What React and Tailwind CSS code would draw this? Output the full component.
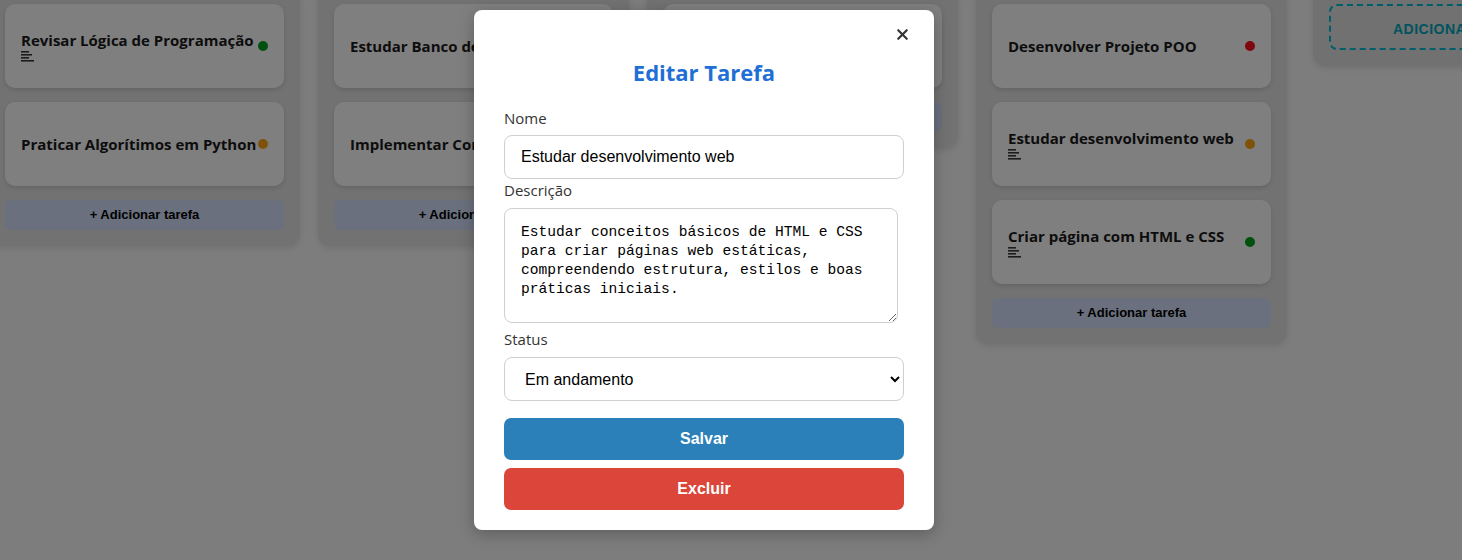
import { X } from 'lucide-react';

const columns = [
  {
    id: 'todo',
    cards: [
      { title: 'Revisar Lógica de Programação', dot: 'bg-[#00a01c]', desc: true },
      { title: 'Praticar Algorítimos em Python', dot: 'bg-[#ffa412]', desc: false },
    ],
  },
  {
    id: 'doing',
    cards: [
      { title: 'Estudar Banco de Dados SQL', dot: 'bg-[#ffa412]', desc: false },
      { title: 'Implementar Componentes React', dot: 'bg-[#ff0000]', desc: false },
    ],
  },
  {
    id: 'review',
    cards: [{ title: 'Estudar Estruturas de Dados', dot: 'bg-[#00a01c]', desc: false }],
  },
  {
    id: 'done',
    cards: [
      { title: 'Desenvolver Projeto POO', dot: 'bg-[#ff0a1e]', desc: false },
      { title: 'Estudar desenvolvimento web', dot: 'bg-[#ffa412]', desc: true },
      { title: 'Criar página com HTML e CSS', dot: 'bg-[#00a01c]', desc: true },
    ],
  },
];

function DescIcon() {
  return (
    <svg width="13" height="11" viewBox="0 0 13 11" className="mt-[1px] text-[#3a3a3a]">
      <rect x="0" y="0" width="8" height="1.6" fill="currentColor" />
      <rect x="0" y="3" width="11" height="1.6" fill="currentColor" />
      <rect x="0" y="6" width="8" height="1.6" fill="currentColor" />
      <rect x="0" y="9" width="13" height="1.6" fill="currentColor" />
    </svg>
  );
}

function Card({ card }) {
  return (
    <div className="h-[84px] bg-white rounded-[10px] shadow-[0_2px_4px_rgba(0,0,0,0.12)] px-4 flex items-center justify-between gap-[2px]">
      <div className="flex flex-col">
        <span className="font-['Open_Sans',sans-serif] font-bold text-[15px] leading-[20px] text-[#1a1a1a] whitespace-nowrap">
          {card.title}
        </span>
        {card.desc && <DescIcon />}
      </div>
      <span className={`w-[10px] h-[10px] rounded-full shrink-0 ${card.dot}`} />
    </div>
  );
}

function Column({ col }) {
  return (
    <div className="w-[311px] shrink-0 bg-[#e4e4e4] rounded-[12px] p-4 flex flex-col gap-[14px] shadow-[0_2px_6px_rgba(0,0,0,0.1)]">
      {col.cards.map((c) => (
        <Card key={c.title} card={c} />
      ))}
      <button className="h-[30px] rounded-[6px] bg-[#d4e0fa] font-['Liberation_Sans',Arial,sans-serif] font-bold text-[13px] text-black">
        + Adicionar tarefa
      </button>
    </div>
  );
}

export default function App() {
  return (
    <div className="relative h-[560px] w-[1462px] overflow-hidden bg-[#fafafa]">
      {/* Board */}
      <div className="flex items-start gap-[18px] -ml-[11px] -mt-[12px]">
        {columns.map((col) => (
          <Column key={col.id} col={col} />
        ))}
        <div className="w-[311px] shrink-0 ml-[8px] bg-[#e2e2e2] rounded-[12px] p-4 shadow-[0_2px_6px_rgba(0,0,0,0.1)]">
          <div className="h-[46px] rounded-[8px] border-2 border-dashed border-[#00bcd4] flex flex-col items-center justify-end pb-[8px] overflow-hidden">
            <span className="font-['Liberation_Sans',Arial,sans-serif] font-bold text-[14px] tracking-[0.5px] text-[#00a8bd]">
              ADICIONAR COLUNA
            </span>
          </div>
        </div>
      </div>

      {/* Overlay + modal */}
      <div className="absolute inset-0 bg-black/50 flex justify-center pr-[54px] pt-[10px]">
        <div className="w-[460px] h-[520px] bg-white rounded-[8px] shadow-[0_4px_16px_rgba(0,0,0,0.25)] px-[30px] pt-[10px] flex flex-col">
          <div className="flex justify-end -mr-[7px] h-[28px] items-center">
            <button className="text-[#333]" title="Fechar">
              <X size={17} strokeWidth={3} />
            </button>
          </div>
          <h2 className="mt-[9px] mb-[21px] text-center font-['Open_Sans',sans-serif] font-bold text-[22px] leading-[30px] text-[#1f6fd6]">
            Editar Tarefa
          </h2>

          <label className="font-['Open_Sans',sans-serif] text-[15px] leading-[20px] text-[#333] mb-[7px]">Nome</label>
          <input
            defaultValue="Estudar desenvolvimento web"
            className="h-[44px] w-full rounded-[8px] border border-[#cfcfcf] px-4 font-['Liberation_Sans',Arial,sans-serif] text-[16px] text-black outline-none"
          />

          <label className="mt-[1px] font-['Open_Sans',sans-serif] text-[15px] leading-[20px] text-[#333] mb-[8px]">Descrição</label>
          <textarea
            defaultValue="Estudar conceitos básicos de HTML e CSS para criar páginas web estáticas, compreendendo estrutura, estilos e boas práticas iniciais."
            className="block h-[115px] w-[394px] rounded-[8px] border border-[#cfcfcf] px-4 pt-[14px] pb-[10px] font-['Liberation_Mono','Courier_New',monospace] text-[14.6px] leading-[19px] text-black outline-none mb-[6px]"
          />

          <label className="font-['Open_Sans',sans-serif] text-[15px] leading-[20px] text-[#333] mb-[8px]">Status</label>
          <select
            defaultValue="andamento"
            className="h-[44px] w-full rounded-[8px] border border-[#cfcfcf] bg-white pl-4 pr-1 font-['Liberation_Sans',Arial,sans-serif] text-[16px] text-black outline-none"
          >
            <option value="fazer">A fazer</option>
            <option value="andamento">Em andamento</option>
            <option value="concluido">Concluído</option>
          </select>

          <button className="mt-[17px] h-[42px] w-full rounded-[7px] bg-[#2b80b9] font-['Liberation_Sans',Arial,sans-serif] font-bold text-[16px] text-white">
            Salvar
          </button>
          <button className="mt-[8px] h-[42px] w-full rounded-[7px] bg-[#dc4539] font-['Liberation_Sans',Arial,sans-serif] font-bold text-[16px] text-white">
            Excluir
          </button>
        </div>
      </div>
    </div>
  );
}
